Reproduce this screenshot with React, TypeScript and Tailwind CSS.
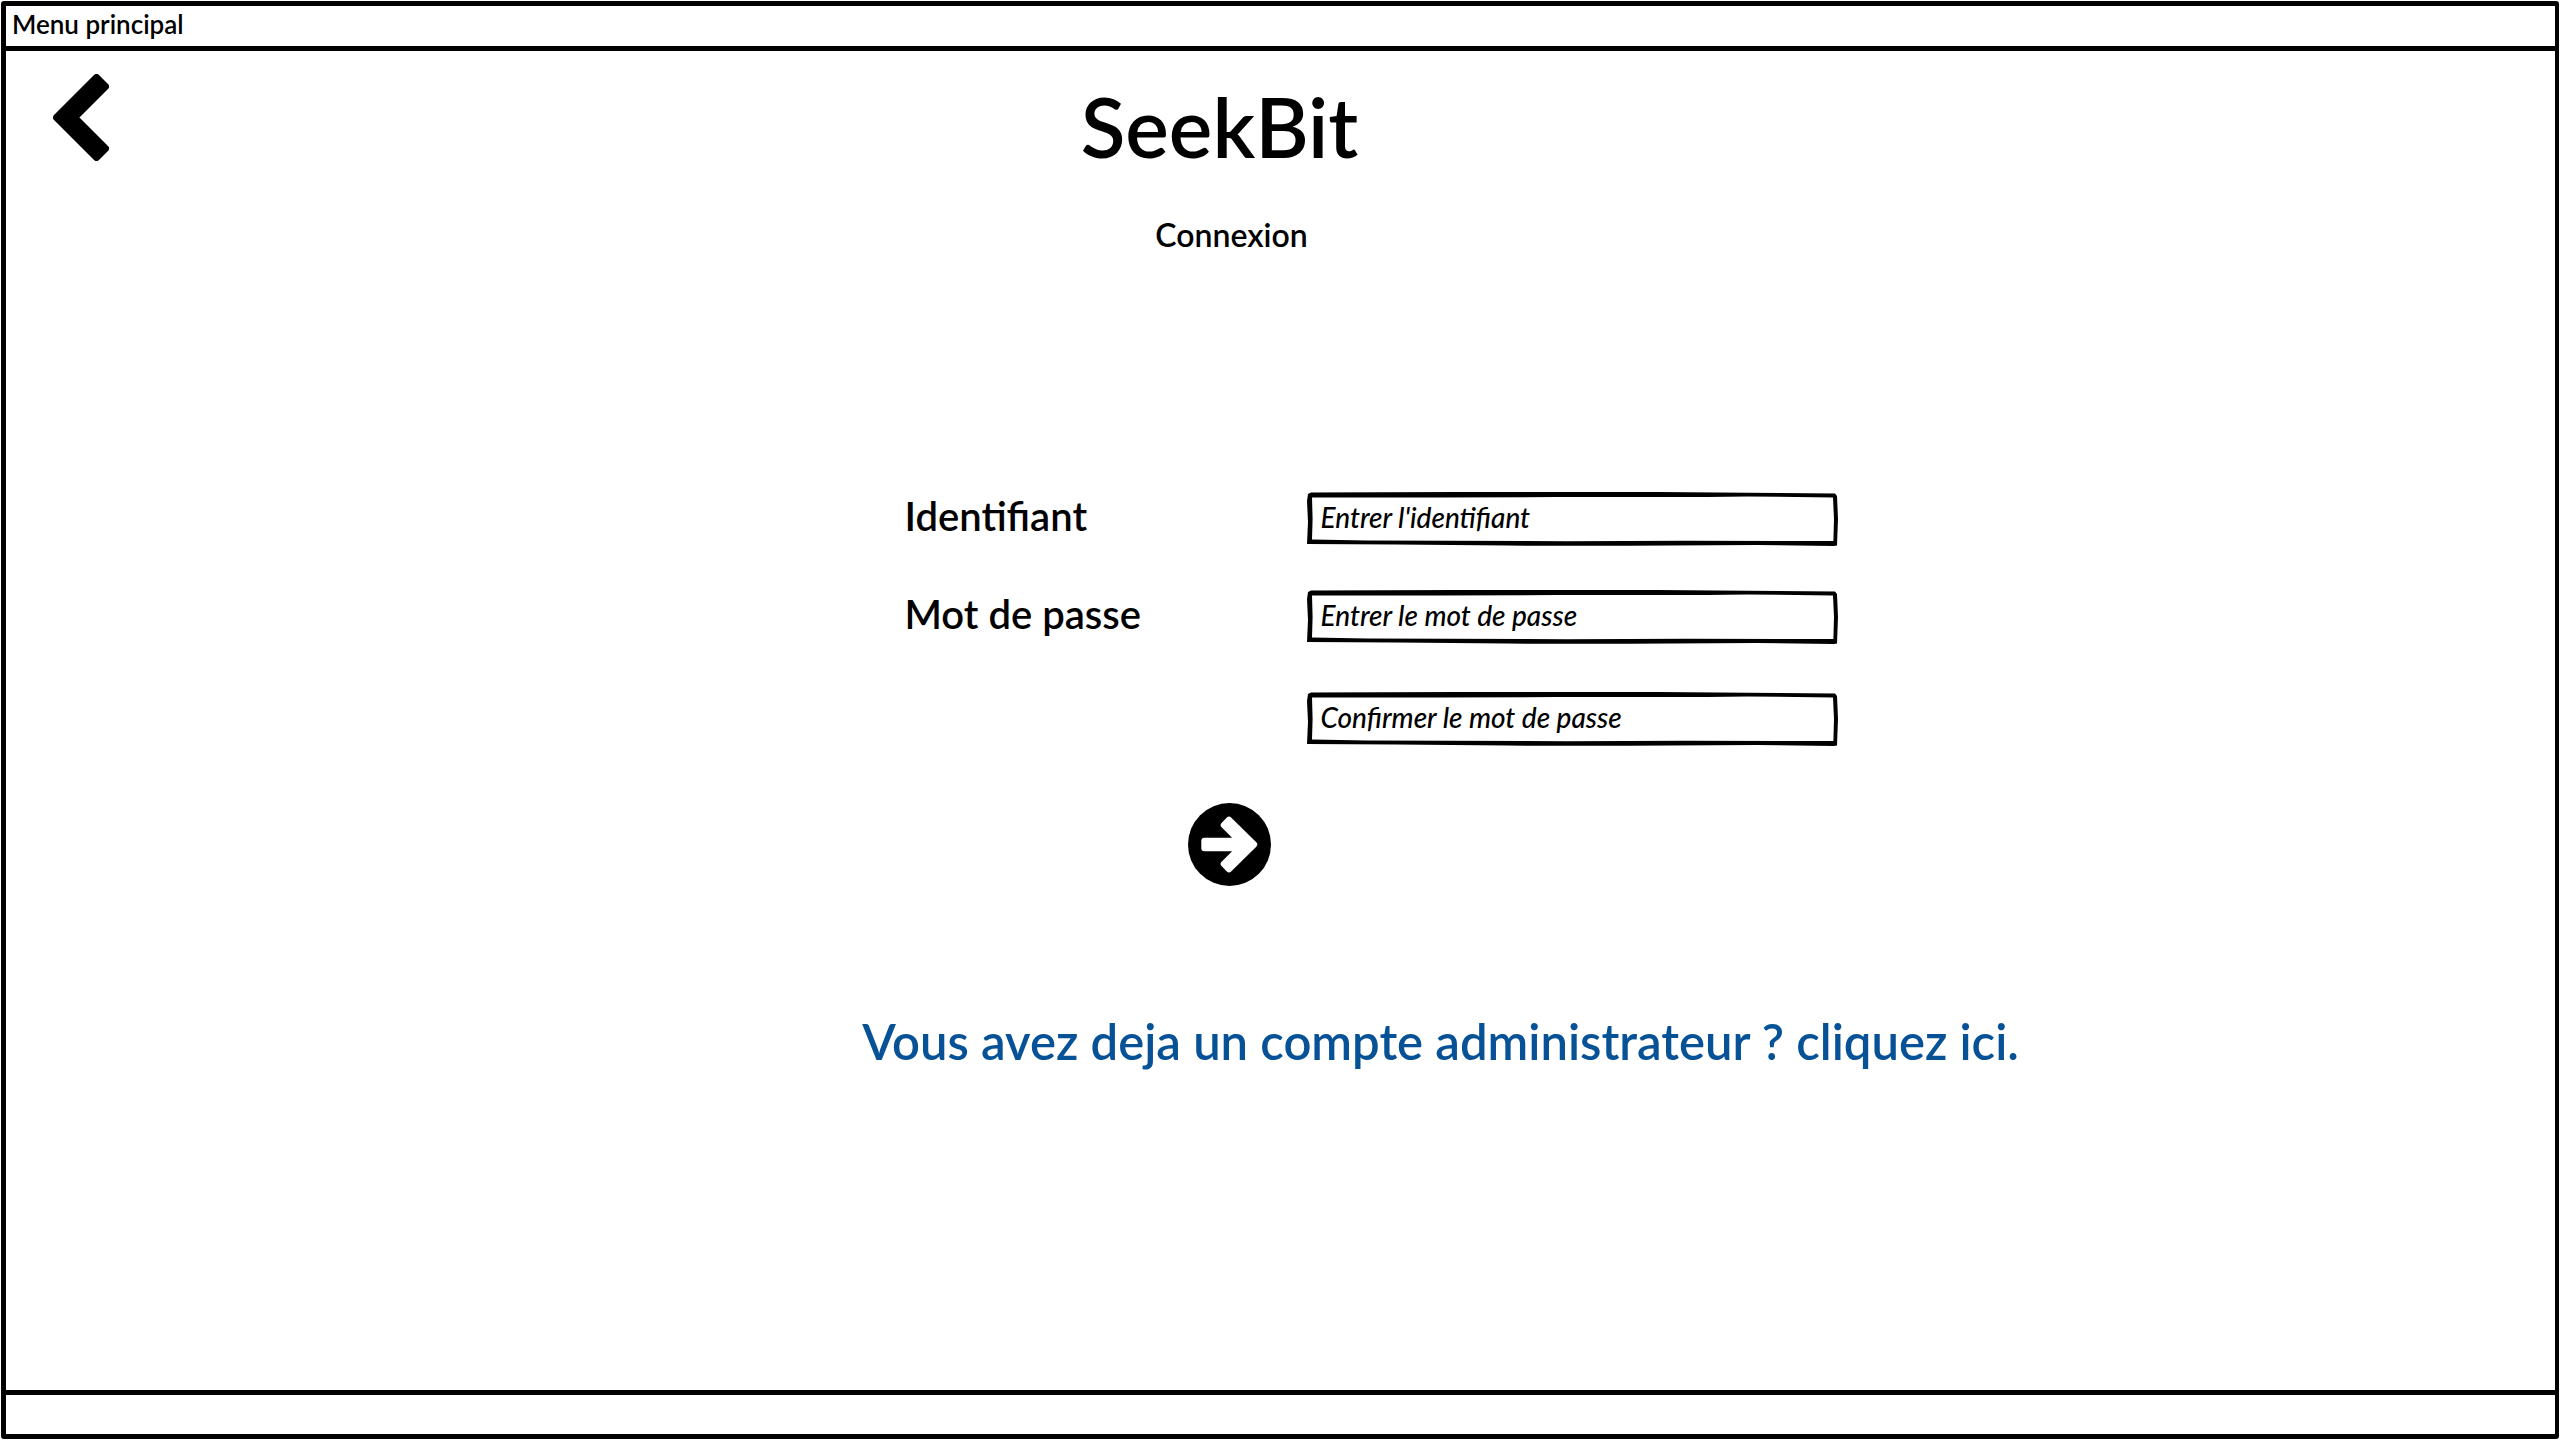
type SketchInputProps = {
  id: string;
  type: "text" | "password";
  placeholder: string;
  label?: string;
};

function SketchInput({ id, type, placeholder, label }: SketchInputProps) {
  return (
    <div className="relative h-[52px] w-full">
      <input
        id={id}
        type={type}
        placeholder={placeholder}
        aria-label={label}
        className="block h-full w-full bg-transparent pt-1 pr-3 pb-2 pl-[14px] text-[28px] leading-10 font-medium italic outline-none placeholder:text-black placeholder:opacity-100"
      />
      <svg
        aria-hidden="true"
        viewBox="0 0 531 54"
        preserveAspectRatio="none"
        className="pointer-events-none absolute -top-px left-0 h-[54px] w-full"
      >
        <path
          fillRule="evenodd"
          d="M0 9 L1 2 L4 0.6 L150 0 L350 0 L440 0.8 L528 1.4 L530 4 L531 27 L530 53.5 L527 54 L450 53 L320 53.8 L200 53.6 L90 52.6 L0 52 L1 30 Z M5 5.4 L130 5.6 L250 5 L400 5 L440 4.4 L526 5.6 L527 27 L526.4 49 L380 48.8 L260 49.2 L60 48.6 L5 47.4 L5.6 27 Z"
        />
      </svg>
    </div>
  );
}

export default function App() {
  return (
    <div className="flex min-h-screen flex-col bg-white p-px font-['Lato',sans-serif] font-semibold text-black">
      <div className="flex grow flex-col rounded-[3px] border-[5px] border-r-4 border-black">
        <header className="h-[45px] border-b-[5px] border-black pl-[6px] text-[26px] leading-9">
          Menu principal
        </header>

        <main className="relative flex grow flex-col items-center pt-[25px]">
          <button type="button" aria-label="Retour" className="absolute top-[23px] left-[47px]">
            <svg viewBox="0 0 56 87" className="h-[87px] w-14">
              <path
                d="M3.5 43.5 L43.5 3.5 L52.5 12.5 L21.5 43.5 L52.5 74.5 L43.5 83.5 Z"
                stroke="black"
                strokeWidth="7"
                strokeLinejoin="round"
              />
            </svg>
          </button>

          <h1 className="pr-[122px] text-[82px] leading-[100px]">SeekBit</h1>
          <h2 className="mt-[39px] pr-[98px] text-[32px] leading-10">Connexion</h2>

          <form
            className="mt-[238px] flex flex-col items-center"
            onSubmit={(event) => event.preventDefault()}
          >
            <div className="ml-[181px] grid grid-cols-[402px_531px] items-start gap-y-[46px] text-[40px]">
              <label htmlFor="identifiant" className="leading-[46px]">
                Identifiant
              </label>
              <SketchInput id="identifiant" type="text" placeholder="Entrer l'identifiant" />
              <label htmlFor="mot-de-passe" className="leading-[46px]">
                Mot de passe
              </label>
              <SketchInput id="mot-de-passe" type="password" placeholder="Entrer le mot de passe" />
              <div className="col-start-2 pt-1">
                <SketchInput
                  id="confirmation"
                  type="password"
                  placeholder="Confirmer le mot de passe"
                  label="Confirmer le mot de passe"
                />
              </div>
            </div>

            <button type="submit" aria-label="Valider" className="mt-[58px] mr-[102px]">
              <svg viewBox="0 0 83 83" className="size-[83px]">
                <circle cx="41.5" cy="41.5" r="41.5" />
                <path
                  d="M16.3 37.7 H51.2 L35.7 22.2 L41 16.7 L66.2 41.5 L41 66.3 L35.7 60.8 L51.2 45.3 H16.3 Z"
                  fill="white"
                  stroke="white"
                  strokeWidth="6"
                  strokeLinejoin="round"
                />
              </svg>
            </button>
          </form>

          <a href="#" className="mt-[125px] ml-80 text-[49px] leading-[60px] text-[#075297]">
            Vous avez deja un compte administrateur ? cliquez ici.
          </a>
        </main>

        <footer className="h-11 border-t-[5px] border-black" />
      </div>
    </div>
  );
}
